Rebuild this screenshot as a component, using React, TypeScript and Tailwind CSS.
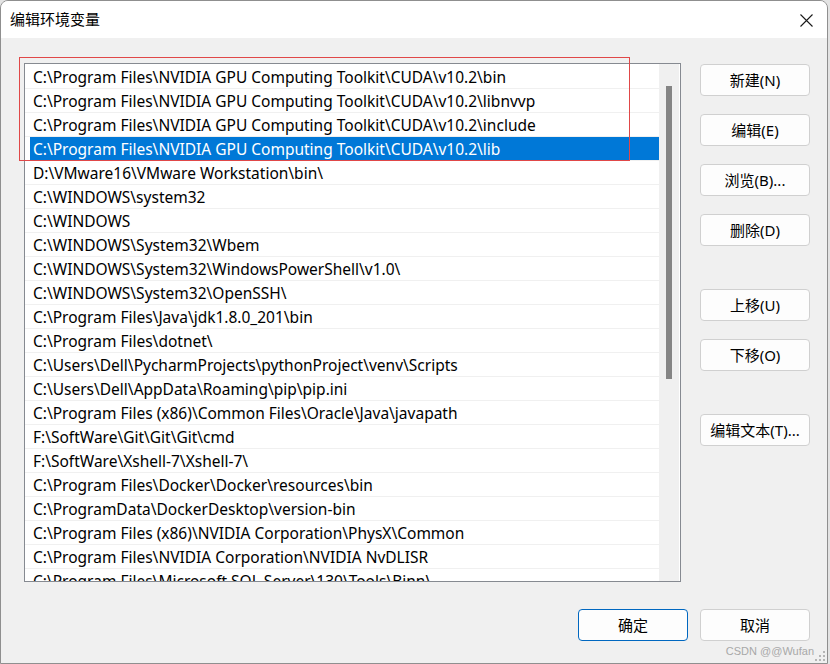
import React from "react";

const items: string[] = [
  "C:\\Program Files\\NVIDIA GPU Computing Toolkit\\CUDA\\v10.2\\bin",
  "C:\\Program Files\\NVIDIA GPU Computing Toolkit\\CUDA\\v10.2\\libnvvp",
  "C:\\Program Files\\NVIDIA GPU Computing Toolkit\\CUDA\\v10.2\\include",
  "C:\\Program Files\\NVIDIA GPU Computing Toolkit\\CUDA\\v10.2\\lib",
  "D:\\VMware16\\VMware Workstation\\bin\\",
  "C:\\WINDOWS\\system32",
  "C:\\WINDOWS",
  "C:\\WINDOWS\\System32\\Wbem",
  "C:\\WINDOWS\\System32\\WindowsPowerShell\\v1.0\\",
  "C:\\WINDOWS\\System32\\OpenSSH\\",
  "C:\\Program Files\\Java\\jdk1.8.0_201\\bin",
  "C:\\Program Files\\dotnet\\",
  "C:\\Users\\Dell\\PycharmProjects\\pythonProject\\venv\\Scripts",
  "C:\\Users\\Dell\\AppData\\Roaming\\pip\\pip.ini",
  "C:\\Program Files (x86)\\Common Files\\Oracle\\Java\\javapath",
  "F:\\SoftWare\\Git\\Git\\Git\\cmd",
  "F:\\SoftWare\\Xshell-7\\Xshell-7\\",
  "C:\\Program Files\\Docker\\Docker\\resources\\bin",
  "C:\\ProgramData\\DockerDesktop\\version-bin",
  "C:\\Program Files (x86)\\NVIDIA Corporation\\PhysX\\Common",
  "C:\\Program Files\\NVIDIA Corporation\\NVIDIA NvDLISR",
  "C:\\Program Files\\Microsoft SQL Server\\130\\Tools\\Binn\\",
];

const font = { fontFamily: '"Noto Sans", "Noto Sans CJK SC", sans-serif' };

function Btn({ label, primary }: { label: string; primary?: boolean }) {
  return (
    <div
      className={
        "w-[110px] h-[32px] rounded-[4px] bg-[#fdfdfd] flex items-center justify-center text-[15px] text-black border " +
        (primary ? "border-[#0067c0]" : "border-[#d0d0d0]")
      }
    >
      {label}
    </div>
  );
}

export default function App() {
  return (
    <div className="w-[830px] h-[664px] bg-[#e3e3e3] overflow-hidden" style={font}>
      <div className="w-[828px] h-[664px] rounded-t-[8px] border border-[#8f8f8f] flex flex-col overflow-hidden relative">
        {/* Title bar */}
        <div className="h-[37px] bg-white flex items-center justify-between pl-[9px] pr-[14px] shrink-0">
          <span className="text-[15px] text-black leading-none">编辑环境变量</span>
          <svg width="13" height="13" viewBox="0 0 13 13" className="mt-[1px]">
            <path d="M0.5 0.5 L12.5 12.5 M12.5 0.5 L0.5 12.5" stroke="#1a1a1a" strokeWidth="1.1" fill="none" />
          </svg>
        </div>

        {/* Body */}
        <div className="flex-1 bg-[#f0f0f0] relative pt-[25px] pl-[23px] pr-[17px]">
          <div className="flex">
            {/* List */}
            <div className="w-[657px] h-[519px] border border-[#868a91] bg-white flex overflow-hidden">
              <div className="w-[634px] pt-[1px] overflow-hidden">
                {items.map((t, i) => (
                  <div key={i} className="h-[24px] border-b border-[#f0f0f0] pl-[5px] flex">
                    <div
                      className={
                        "flex-1 pl-[3px] pt-[2px] flex items-center text-[15.5px] whitespace-nowrap leading-none " +
                        (i === 3 ? "bg-[#0078d7] text-white" : "text-black")
                      }
                    >
                      {t}
                    </div>
                  </div>
                ))}
              </div>
              <div className="w-[20px] bg-[#f0f0f0] pt-[22px] flex justify-center">
                <div className="w-[6px] h-[293px] bg-[#858585]" />
              </div>
            </div>

            {/* Right buttons */}
            <div className="ml-[19px] mt-[1px] flex flex-col">
              <Btn label="新建(N)" />
              <div className="h-[18px]" />
              <Btn label="编辑(E)" />
              <div className="h-[18px]" />
              <Btn label="浏览(B)..." />
              <div className="h-[18px]" />
              <Btn label="删除(D)" />
              <div className="h-[43px]" />
              <Btn label="上移(U)" />
              <div className="h-[18px]" />
              <Btn label="下移(O)" />
              <div className="h-[43px]" />
              <Btn label="编辑文本(T)..." />
            </div>
          </div>

          {/* Bottom buttons */}
          <div className="mt-[27px] flex justify-end gap-[12px]">
            <Btn label="确定" primary />
            <Btn label="取消" />
          </div>

          {/* Red annotation rectangle */}
          <div className="absolute left-[18px] top-[19px] w-[611px] h-[104px] border border-[#e04848] pointer-events-none" />

          {/* Watermark */}
          <div
            className="absolute right-[13px] bottom-[6px] text-[11px] text-[#a8a8a8] leading-none"
            style={{ fontFamily: '"Liberation Sans", sans-serif' }}
          >
            CSDN @@Wufan
          </div>

          {/* Resize grip */}
          <svg width="12" height="12" viewBox="0 0 12 12" className="absolute right-[1px] bottom-[1px]">
            <rect x="9" y="1" width="2" height="2" fill="#b5b5b5" />
            <rect x="5" y="5" width="2" height="2" fill="#b5b5b5" />
            <rect x="9" y="5" width="2" height="2" fill="#b5b5b5" />
            <rect x="1" y="9" width="2" height="2" fill="#b5b5b5" />
            <rect x="5" y="9" width="2" height="2" fill="#b5b5b5" />
            <rect x="9" y="9" width="2" height="2" fill="#b5b5b5" />
          </svg>
        </div>
      </div>
    </div>
  );
}
